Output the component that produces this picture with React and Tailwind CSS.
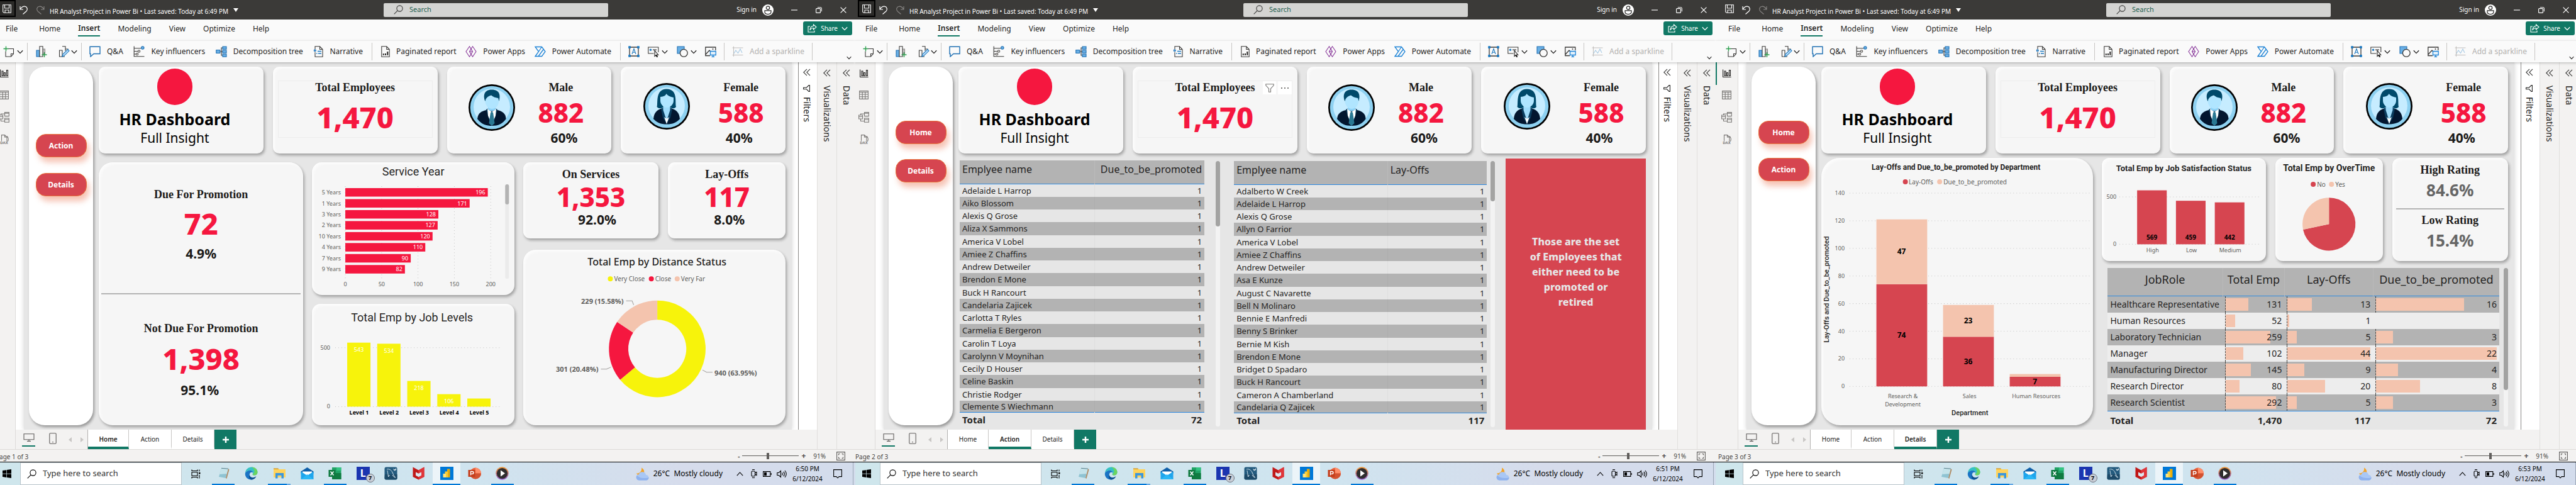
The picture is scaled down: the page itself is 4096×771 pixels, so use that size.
import React from "react";
import clsx from "clsx";

/* ------------------------------------------------------------------ */
/* Data                                                                */
/* ------------------------------------------------------------------ */

const PAGES = ["Home", "Action", "Details"];
const MENU = ["File", "Home", "Insert", "Modeling", "View", "Optimize", "Help"];

const SERVICE_YEARS = [
  ["5 Years", 196],
  ["1 Years", 171],
  ["3 Years", 128],
  ["2 Years", 127],
  ["10 Years", 120],
  ["4 Years", 110],
  ["7 Years", 90],
  ["9 Years", 82],
];

const JOB_LEVELS = [543, 534, 218, 106, 69];

const PROMOTED = [
  "Adelaide L Harrop",
  "Aiko Blossom",
  "Alexis Q Grose",
  "Aliza X Sammons",
  "America V Lobel",
  "Amiee Z Chaffins",
  "Andrew Detweiler",
  "Brendon E Mone",
  "Buck H Rancourt",
  "Candelaria Zajicek",
  "Carlotta T Ryles",
  "Carmelia E Bergeron",
  "Carolin T Loya",
  "Carolynn V Moynihan",
  "Cecily D Houser",
  "Celine Baskin",
  "Christie Rodger",
  "Clemente S Wiechmann",
];

const LAID_OFF = [
  "Adalberto W Creek",
  "Adelaide L Harrop",
  "Alexis Q Grose",
  "Allyn O Farrior",
  "America V Lobel",
  "Amiee Z Chaffins",
  "Andrew Detweiler",
  "Asa E Kunze",
  "August C Navarette",
  "Bell N Molinaro",
  "Bennie E Manfredi",
  "Benny S Brinker",
  "Bernie M Kish",
  "Brendon E Mone",
  "Bridget D Spadaro",
  "Buck H Rancourt",
  "Cameron A Chamberland",
  "Candelaria Q Zajicek",
];

const ROLES = [
  ["Healthcare Representative", 131, 13, 16],
  ["Human Resources", 52, 1, null],
  ["Laboratory Technician", 259, 5, 3],
  ["Manager", 102, 44, 22],
  ["Manufacturing Director", 145, 9, 4],
  ["Research Director", 80, 20, 8],
  ["Research Scientist", 292, 5, 3],
];

const DEPARTMENTS = [
  { lines: ["Research &", "Development"], off: 74, due: 47 },
  { lines: ["Sales"], off: 36, due: 23 },
  { lines: ["Human Resources"], off: 7, due: 2 },
];

/* ------------------------------------------------------------------ */
/* Icons                                                               */
/* ------------------------------------------------------------------ */

function Icon({ box = "0 0 18 18", className = "size-[18px]", children }) {
  return (
    <svg viewBox={box} className={clsx("shrink-0", className)} fill="none" stroke="currentColor" strokeWidth="1.1" aria-hidden="true">
      {children}
    </svg>
  );
}

const Chevron = ({ className = "h-[7px] w-[10px]" }) => (
  <Icon box="0 0 10 7" className={className}>
    <path d="M.8 1.2 5 5.6l4.200-4.400" strokeWidth="1.300" />
  </Icon>
);

const SaveIcon = () => (
  <Icon box="0 0 14 14" className="size-[14px]">
    <path d="M.7.7h12.600v12.600H2.200L.7 11.800ZM3.500.7v5.300h7V.7M4 13.300V9h6v4.300" />
  </Icon>
);
const UndoIcon = () => (
  <Icon box="0 0 13 14" className="h-[14px] w-[13px]">
    <path d="M1 1v5h5M1.200 5.800C3.500 2 6 .9 8.500 1.200c4 .6 4.800 5 2.500 7.600L5.500 13.500" strokeWidth="1.200" />
  </Icon>
);
const RedoIcon = () => (
  <Icon box="0 0 13 14" className="h-[14px] w-[13px]">
    <path d="M12 1v5H7M11.800 5.800C9.500 2 7 .9 4.500 1.200.5 1.800-.3 6.200 2 8.800l5.500 4.700" />
  </Icon>
);
const SearchIcon = ({ className = "size-[15px]" }) => (
  <Icon box="0 0 15 15" className={className}>
    <circle cx="9.500" cy="5.500" r="4.600" />
    <path d="M6.200 8.800.7 14.300" />
  </Icon>
);
const NewPageIcon = () => (
  <Icon>
    <path d="M6 4.500h10.500v8l-4 4.500H4V8.500M16.500 12.500h-4V17" stroke="#3b3a39" />
    <path d="M4.500.5v8M.5 4.500h8" stroke="#2ea04f" strokeWidth="1.400" />
  </Icon>
);
const NewVisualIcon = () => (
  <Icon>
    <path d="M1 7h5v10H1z" fill="#69afe5" stroke="#1f6fb2" />
    <path d="M10.500 5h4v8h-4z" fill="#c8c6c4" stroke="#8a8886" />
    <path d="M6 .8h5V17H6z" fill="#fafafa" stroke="#3b3a39" />
    <path d="M13.500 10v8M9.500 14h8" stroke="#2ea04f" strokeWidth="1.400" />
  </Icon>
);
const EditVisualIcon = () => (
  <Icon>
    <path d="M1.500 7h4.500v10H1.500zM6 .8h5V8M6 7v10h4M11 5h4v3" stroke="#3b3a39" />
    <path d="m6 17 1-4 8-7.500 2 2.300L9 15.600Z" fill="#bfe0fa" stroke="#1f7ac0" />
  </Icon>
);
const QaIcon = () => (
  <Icon>
    <path d="M1 1.200h16v11.300H7l-5 4.500v-4.500H1Z" stroke="#1f6fb2" strokeWidth="1.400" />
  </Icon>
);
const KeyInfluencersIcon = () => (
  <Icon>
    <path d="M1.200.5v16.300H17.500M1.200 3.800h11M1.200 8.500h6M1.200 13h3" stroke="#3b3a39" />
    <circle cx="14.800" cy="3" r="2.200" fill="#69afe5" stroke="#1f6fb2" />
    <circle cx="9" cy="8.500" r="1.800" fill="#d2d0ce" stroke="#605e5c" />
    <circle cx="6" cy="13" r="1.800" fill="#d2d0ce" stroke="#605e5c" />
  </Icon>
);
const DecompositionIcon = () => (
  <Icon>
    <path d="M7 9h4M11 3H9v12h2" stroke="#3b3a39" />
    <path d="M.8 6.500h6v5h-6zM11 1h6v4.200h-6zM11 7h6v4.200h-6zM11 13h6v4.200h-6z" fill="#69afe5" stroke="#1f6fb2" />
  </Icon>
);
const NarrativeIcon = () => (
  <Icon box="0 0 16 18" className="h-[18px] w-4">
    <path d="M3 5V.8h7.500L15 5.500v11.700H3V10M10.500.8v4.700H15" stroke="#3b3a39" />
    <circle cx="2.800" cy="7.200" r="1.500" fill="#69afe5" stroke="#1f6fb2" />
    <path d="M7 8.500h6M5 12h1.500M8 12h5" stroke="#1f7ac0" strokeWidth="1.300" />
  </Icon>
);
const PaginatedIcon = () => (
  <Icon box="0 0 14 18" className="h-[18px] w-[14px]">
    <path d="M.8.800h8L13.200 5.500v11.700H.8ZM8.800.8v4.700h4.400" stroke="#3b3a39" />
    <path d="M3.800 14.800v-2.500M7 14.800V12M10.300 14.800V9" stroke="#252423" strokeWidth="2" />
  </Icon>
);
const PowerAppsIcon = () => (
  <Icon>
    <path d="m6.500.8 5 8.200-5 8.200L1 9Z" stroke="#8a3a9b" />
    <path d="m11.500.8 5.500 8.200-5.500 8.200-5-8.200ZM6.500 9h5M4 4.900h0" stroke="#8a3a9b" />
  </Icon>
);
const PowerAutomateIcon = () => (
  <Icon>
    <path d="M1 1.500h10.500L17 9l-5.500 7.500H1L6.500 9ZM11.500 1.500 2 15.500M14.500 5 6 16.500" stroke="#1f84d6" strokeWidth="1.300" />
  </Icon>
);
const TextBoxIcon = () => (
  <Icon>
    <path d="M2 2h14v14H2z" stroke="#3b3a39" strokeWidth="1.300" />
    <path d="M.8.8h2.600v2.600H.8zM14.600.8h2.600v2.600h-2.600zM.8 14.600h2.600v2.600H.8zM14.600 14.600h2.600v2.600h-2.600z" fill="#1f7ac0" stroke="#1f7ac0" />
    <path d="m6 13 3-8.500L12 13M7 10.300h4" stroke="#1f7ac0" />
  </Icon>
);
const ButtonsIcon = () => (
  <Icon>
    <path d="M9.500 12H.8V2h16v8" stroke="#3b3a39" />
    <circle cx="4.500" cy="6.200" r="1.700" fill="#1f7ac0" stroke="none" />
    <path d="M8 6.200h6" stroke="#3b3a39" strokeWidth="1.300" />
    <path d="M11 7.500v9l2-1.800 1.500 3 1-.5-1.500-3h2.700Z" fill="#fafafa" stroke="#252423" />
  </Icon>
);
const ShapesIcon = () => (
  <Icon>
    <path d="M1 1h11v11H1z" fill="#69afe5" stroke="#1f6fb2" />
    <circle cx="11.300" cy="11.300" r="5.900" fill="#fafafa" stroke="#3b3a39" strokeWidth="1.300" />
  </Icon>
);
const ImageIcon = () => (
  <Icon>
    <path d="M8 15.500H.8V2h16v5M1 13.500l6-6.500 3 3.500" stroke="#3b3a39" strokeWidth="1.300" />
    <circle cx="12.500" cy="5" r="1" fill="#3b3a39" stroke="none" />
    <path d="M8.500 8.500h8.700v6H8.500zM12.800 14.500v3M10.500 17.400h4.600" fill="#e6f2fb" stroke="#1f84d6" strokeWidth="1.300" />
  </Icon>
);
const SparklineIcon = () => (
  <Icon>
    <path d="M2.500.8v16M.5 3h17M.5 14.500h17" stroke="#c0bebc" />
    <path d="m3 12 3-5 3.500 4.500L13 5l3 6" stroke="#a9cbe4" />
  </Icon>
);
const ShareIcon = () => (
  <Icon box="0 0 15 14" className="h-[14px] w-[15px]">
    <path d="M4 4H1v9h10v-2.500M9.500 1 14 5 9.500 9V6.500C6.500 6.500 5 8 3.800 10 4.200 6.500 6 3.600 9.500 3.300Z" stroke="white" />
  </Icon>
);
const PersonIcon = () => (
  <Icon box="0 0 18 18" className="size-[18px]">
    <circle cx="9" cy="9" r="9" fill="white" stroke="none" />
    <circle cx="9" cy="5.500" r="2.700" stroke="#252423" strokeWidth="1.200" />
    <path d="M4 9.800h10v2c0 5-10 5-10 0Z" stroke="#252423" strokeWidth="1.200" />
  </Icon>
);

const RailChart = () => (
  <Icon box="0 0 14 13" className="h-[13px] w-[14px] text-[#252423]">
    <path d="M.6.500v12h13M3 3h2v7.500H3zM6.500 5.500h2v5h-2zM10.500 1.500h2v9h-2z" />
  </Icon>
);
const RailTable = () => (
  <Icon box="0 0 15 14" className="h-[14px] w-[15px] text-[#7a7876]">
    <path d="M.6.600h13.800v12.800H.6zM.6 2.500h13.800M.6 6h13.800M.6 9.800h13.800M5.200 2.500v11M9.800 2.500v11" />
  </Icon>
);
const RailModel = () => (
  <Icon box="0 0 17 17" className="size-[17px] text-[#7a7876]">
    <path d="M9.500.6h6.800v6H9.500zM9.500 2.300h6.800M.6 5h6v6h-6zM.6 7.500h6M9.500 10h6.800v6.200H9.500zM9.500 12h6.800M3.500 5V3h6M3.500 11v3.500h6" />
  </Icon>
);
const RailDax = () => (
  <div className="flex flex-col items-center text-[#7a7876]">
    <Icon box="0 0 14 11" className="-mb-px h-[11px] w-[14px]">
      <path d="M2.500 10V.6h5L11 4v7M7.500.6V4H11M11 2.500c2.500 2 2.800 5.500 1.500 8" />
    </Icon>
    <span className="text-[6px] font-bold leading-[6px]">DAX</span>
  </div>
);

const DoubleLeft = () => (
  <Icon box="0 0 12 12" className="size-3 text-[#3b3a39]">
    <path d="M6 .8.800 6 6 11.200M11 .8 5.800 6l5.200 5.200" />
  </Icon>
);

/* Taskbar icons */
const WindowsIcon = () => (
  <svg viewBox="0 0 14 14" className="size-[14px]" aria-hidden="true">
    <path d="M0 2 6 1.200v5.500H0zM6.700 1 14 0v6.700H6.700zM0 7.400h6v5.500L0 12zM6.700 7.400H14V14l-7.300-1z" fill="#000" />
  </svg>
);
const TaskViewIcon = () => (
  <Icon box="0 0 15 15" className="size-[15px] text-black">
    <path d="M1 .5v2h9v-2M1 4.800h9v5.400H1zM1 14.500v-2h9v2M13 .5v3M13 9v5.500" />
    <path d="M12 5h2.500v2.500H12z" fill="#000" stroke="none" />
  </Icon>
);
const APPS = [
  {
    name: "Notepad",
    open: true,
    art: (
      <>
        <path d="m7 2 11 1-4 15-11-2Z" fill="#8fc3d2" />
        <path d="m7 2 11 1-2 8-12 1Z" fill="#c4e3ea" />
        <path d="m18 3 1.500 1.500-4 14.500-1.500-1Z" fill="#b08a62" />
        <path d="M7 2.300 18 3.200" stroke="#5b7f8a" strokeWidth="1" />
      </>
    ),
  },
  {
    name: "Edge",
    art: (
      <>
        <path d="M.8 11C1 4 6 .5 11 .5c6 0 9.500 4 9.500 8 0 3-2 5-5 5-2 0-3-.8-3-1.800 0-.8.8-1 .8-2.500C13.300 7 11 5.800 8.500 5.800 5 5.800 1.500 8 .8 11Z" fill="#35c1c4" />
        <path d="M11 .5c6 0 9.500 4 9.500 8 0 3-2 5-5 5-2 0-3-.8-3-1.800 3.500-.2 5-8-1.500-11.200Z" fill="#6cd45f" />
        <path d="M.8 11C1.500 8 5 5.800 8.500 5.800 11 5.800 13.300 7 13.300 9.200 10 7.500 7.500 10 7.800 13c.4 3.500 4.500 6 9.500 4-2 2.500-4.500 3.500-7 3.500C4.500 20.500.6 16 .8 11Z" fill="#1b74c4" />
        <path d="M7.800 13c.4 3.500 4.500 6 10.700 2.300-2 4-5 5.200-8 5.200-3.500-1-4.500-5-2.700-7.500Z" fill="#0d4f91" />
      </>
    ),
  },
  {
    name: "File Explorer",
    open: true,
    stacked: true,
    art: (
      <>
        <path d="M1 2.500h7l2 2h-9Z" fill="#d99a1c" />
        <path d="M1 4h19v13H1z" fill="#ffd35c" />
        <path d="M4 18.500V10h13v8.500h-3.500v-4.800h-6v4.800Z" fill="#3a96dd" />
      </>
    ),
  },
  {
    name: "Mail",
    art: (
      <>
        <path d="M.5 7.500 10.500 1l10 6.500v3H.5Z" fill="#0f5fa8" />
        <path d="M3 7.500h15v7H3z" fill="#fff" />
        <path d="M.5 7.500 10.500 14l10-6.500V20H.5Z" fill="#1fa5ec" />
        <path d="m.5 20 10-8 10 8Z" fill="#2bb7f5" />
      </>
    ),
  },
  {
    name: "Excel",
    open: true,
    art: (
      <>
        <path d="M6 1h14.500v19H6z" fill="#21a366" />
        <path d="M13 1h7.500v5H13z" fill="#33c481" />
        <path d="M6 10h14.500v10H6z" fill="#107c41" />
        <path d="M.5 5h11v11H.5z" fill="#0f7a40" />
        <path d="m3.500 7.500 5 6M8.500 7.500l-5 6" stroke="#fff" strokeWidth="1.500" />
      </>
    ),
  },
  { name: "L", letter: true },
  {
    name: "MySQL Workbench",
    art: (
      <>
        <rect x=".5" y=".5" width="20" height="20" rx="2.500" fill="#245b7e" />
        <path d="M1 12h19.500v6q0 2.500-2.500 2.500H3Q.5 20.500.5 18Z" fill="#1d4a68" />
        <path d="M4 4c4-1 7 1 9 5s2 6 5 8c-3-.5-4-2-5-4M5 6c.5 4 1 5 1.500 10l2-3" fill="none" stroke="#cfe0ea" strokeWidth="1" />
        <path d="m14 3 3 1.500L19 2v3l-3 1.500Z" fill="#dfe9ef" />
      </>
    ),
  },
  {
    name: "McAfee",
    art: (
      <>
        <path d="m1.500.5 9 5 9-5V16l-9 4.500-9-4.500Z" fill="#c01818" />
        <path d="m10.500 5.500 9-5V16l-9 4.500v-4.300l4.500-2.400V8.500l-4.500 2.300Z" fill="#e0353a" />
        <path d="m6 8.500 4.500 2.300L15 8.500v5.300l-4.500 2.400L6 13.800Z" fill="#dce6ef" />
      </>
    ),
  },
  {
    name: "Power BI",
    open: true,
    current: true,
    art: (
      <>
        <path d="M0 0h21v21H0z" fill="#0078d7" />
        <path d="M11 3.500h4.500v13.500H11z" fill="#e8ad0c" />
        <path d="M7.500 7.500H12V17H7.500z" fill="#f6cd3c" />
        <path d="M4.500 11H9v6H4.500z" fill="#ffe27a" />
      </>
    ),
  },
  {
    name: "PowerPoint",
    art: (
      <>
        <circle cx="12" cy="10.500" r="9" fill="#e8623d" />
        <path d="M12 1.500a9 9 0 0 1 9 9h-9Z" fill="#ff8f6b" />
        <path d="M3 10.500h18a9 9 0 0 1-18 0Z" fill="#d35230" />
        <path d="M.5 5h11v11H.5z" fill="#c43e1c" />
        <path d="M4.500 13.500v-6h2.300q2.200.2 2.200 2t-2.200 1.900H4.800" stroke="#fff" strokeWidth="1.400" fill="none" />
      </>
    ),
  },
  {
    name: "Media Player",
    open: true,
    art: (
      <>
        <defs>
          <linearGradient id="media-ring" x1="0" y1="0" x2="0" y2="1">
            <stop offset="0" stopColor="#f79a2f" />
            <stop offset="1" stopColor="#8e5bd0" />
          </linearGradient>
        </defs>
        <circle cx="10.500" cy="10.500" r="10.300" fill="url(#media-ring)" />
        <circle cx="10.500" cy="10.500" r="8.600" fill="#2f2d2e" />
        <path d="m8 5.500 7 5-7 5Z" fill="#fff" />
      </>
    ),
  },
];

const WeatherIcon = () => (
  <svg viewBox="0 0 22 21" className="h-[21px] w-[22px]" aria-hidden="true">
    <path d="M9 .5C14 3 15 9 10 12.500 6.500 14 2.500 13 1 9.500 6 10 10 6 9 .5Z" fill="#f2a52d" />
    <path d="M5 20.500a4.700 4.700 0 0 1-.3-9.300 6 6 0 0 1 11.500.8A4.300 4.300 0 0 1 17 20.500Z" fill="#a9c7f5" />
    <path d="M5 20.500a4.700 4.700 0 0 1-3-8c3 4 8 5 15 4.500 2 0 3-1 3.500-1.500a4.300 4.300 0 0 1-3.500 5Z" fill="#8fb2ee" />
  </svg>
);

/* Portraits */
function Portrait({ kind }) {
  return (
    <svg viewBox="0 0 74 74" className="size-[74px] shrink-0" role="img" aria-label={kind}>
      <circle cx="37" cy="37" r="37" fill="#000" />
      <circle cx="37" cy="37" r="34.300" fill="#8ed1f1" />
      <circle cx="37" cy="36" r="29" fill="#c6ecff" />
      {kind === "Male" ? (
        <>
          <path d="M14 55c1-9 6-12 14-14h18c8 2 13 5 13.600 14C54 63 47 66 37 66S20 63 14 55Z" fill="#03162f" />
          <path d="m28 40 4-2h10l4 2-4 14-5 12-5-12Z" fill="#0a3c5e" />
          <path d="m30 39 7 5 7-5-1 11-6 14-6-14Z" fill="#fff" />
          <path d="m35 45 2-1.500 2 1.500.500 3 2 14-4.500 4-4.500-4 2-14Z" fill="#2a7893" />
          <path d="M31 34h12v6q-6 5-12 0Z" fill="#8fd3f7" />
          <path d="M26.500 19h21.500v8c0 7-5 12-10.700 12S27 34 26.500 27Z" fill="#b0e5ff" />
          <path d="M26.500 27C23 19 24 8.500 37 8.500S51 18 48.500 27l-1.300-5q-7-1-11.200-4.500-6 1.500-8.500 6Z" fill="#00496a" />
        </>
      ) : (
        <>
          <path d="M21.500 38c2-6-3-28 15.500-28.500C55.500 10 50 30 52 38q-3 3.500-8 1.500H30q-5 2-8.500-1.500Z" fill="#00496a" />
          <path d="M16 57c1-10 5-14 14-17h14c9 3 13 7 14 17-5 6-12 8.500-21 8.500S21 63 16 57Z" fill="#03162f" />
          <path d="m28 41 5-2h8l5 2-3 14-6 10-6-10Z" fill="#0a3c5e" />
          <path d="M31.500 34h11v9l-4.500 14h-2l-4.500-14Z" fill="#a0dcfb" />
          <path d="m33 54 4 3 4-3-4 11Z" fill="#fff" />
          <path d="M27 22q8-.5 9.500-5 3 4.500 11.500 6v5c0 6-5 11-10.500 11S27 34 27 28Z" fill="#b0e5ff" />
        </>
      )}
    </svg>
  );
}

/* ------------------------------------------------------------------ */
/* Window chrome                                                       */
/* ------------------------------------------------------------------ */

function TitleBar({ saveFocused, id }) {
  return (
    <header className="flex h-[31px] items-center bg-[#3b3a38] text-white">
      <div className="flex w-[621px] items-center pl-2">
        <button
          aria-label="Save"
          className={clsx("mb-1 flex h-[27px] w-7 items-center justify-center", saveFocused && "border-2 border-black bg-[#2b2a28]")}
        >
          <SaveIcon />
        </button>
        <button aria-label="Undo" className="ml-[6px]">
          <UndoIcon />
        </button>
        <button aria-label="Redo" className="ml-[14px] text-[#8a8886]">
          <RedoIcon />
        </button>
        <button className="ml-2 flex items-center gap-2 pt-1 text-[10px] leading-4">
          HR Analyst Project in Power Bi • Last saved: Today at 6:49 PM
          <svg viewBox="0 0 8 6" className="mb-1 h-[6px] w-2" aria-hidden="true">
            <path d="M0 0h8L4 6Z" fill="white" />
          </svg>
        </button>
      </div>
      <label htmlFor={`${id}-find`} className="flex h-[22px] w-[357px] items-center gap-[10px] rounded-[2px] bg-[#d4d4d2] pl-4 text-[#3b3a39]">
        <SearchIcon />
        <input
          id={`${id}-find`}
          type="text"
          placeholder="Search"
          className="w-full bg-transparent text-[11px] text-[#1f5f50] outline-none placeholder:text-[#1f5f50]"
        />
      </label>
      <div className="ml-auto flex items-center pr-[14px]">
        <button className="flex items-center gap-[9px] text-[10px]">
          Sign in
          <PersonIcon />
        </button>
        <button aria-label="Minimize" className="ml-[28px]">
          <Icon box="0 0 10 10" className="size-[10px]">
            <path d="M0 5h10" />
          </Icon>
        </button>
        <button aria-label="Restore" className="ml-[29px]">
          <Icon box="0 0 10 10" className="size-[10px]">
            <rect x=".6" y="2.600" width="6.800" height="6.800" rx="1" />
            <path d="M2.800.8h4.700q1.800 0 1.800 1.800v4.700" />
          </Icon>
        </button>
        <button aria-label="Close" className="ml-[29px]">
          <Icon box="0 0 10 10" className="size-[10px]">
            <path d="m.6.6 8.800 8.800M9.400.6.600 9.400" strokeWidth="1.200" />
          </Icon>
        </button>
      </div>
    </header>
  );
}

function MenuBar() {
  return (
    <nav className="flex h-[34px] items-start bg-[#fafafa] pl-[20px] pr-[5px] text-[12px] leading-4 text-[#252423]">
      <div className="flex gap-[28px] pt-[6px]">
        {MENU.map((m) => (
          <button
            key={m}
            className={clsx("h-[21px] pb-1", m === "File" && "mr-[6px]", m === "Insert" && "border-b-2 border-[#117865] font-semibold")}
          >
            {m}
          </button>
        ))}
      </div>
      <button className="ml-auto mt-[3px] flex h-[22px] items-center gap-[6px] rounded-[3px] bg-[#117865] px-[7px] text-[10px] text-white">
        <ShareIcon />
        Share
        <Chevron />
      </button>
    </nav>
  );
}

function Tool({ icon, children, className }) {
  return (
    <button className={clsx("flex items-center gap-[10px] whitespace-nowrap", className)}>
      {icon}
      {children}
    </button>
  );
}

function Ribbon() {
  const group = "flex h-7 items-center border-r border-[#c8c6c4]";
  return (
    <div className="z-10 flex h-[34px] items-center bg-[#fafafa] text-[12px] leading-4 text-[#252423] shadow-[0_1px_4px_rgba(0,0,0,0.25)]">
      <div className={clsx(group, "w-[55px] gap-1 pl-[16px]")}>
        <button aria-label="New page">
          <NewPageIcon />
        </button>
        <Chevron />
      </div>
      <div className={clsx(group, "w-[86px] pl-[13px]")}>
        <button aria-label="New visual">
          <NewVisualIcon />
        </button>
        <button aria-label="More visuals" className="ml-[18px] flex items-center gap-[2px]">
          <EditVisualIcon />
          <Chevron />
        </button>
      </div>
      <div className={clsx(group, "w-[462px] justify-between pl-3 pr-[14px]")}>
        <Tool icon={<QaIcon />}>Q&amp;A</Tool>
        <Tool icon={<KeyInfluencersIcon />}>Key influencers</Tool>
        <Tool icon={<DecompositionIcon />}>Decomposition tree</Tool>
        <Tool icon={<NarrativeIcon />}>Narrative</Tool>
      </div>
      <div className={clsx(group, "w-[395px] justify-between pl-[14px] pr-[14px]")}>
        <Tool icon={<PaginatedIcon />}>Paginated report</Tool>
        <Tool icon={<PowerAppsIcon />}>Power Apps</Tool>
        <Tool icon={<PowerAutomateIcon />}>Power Automate</Tool>
      </div>
      <div className={clsx(group, "w-[165px] justify-between pl-3 pr-3")}>
        <button aria-label="Text box">
          <TextBoxIcon />
        </button>
        <button aria-label="Buttons" className="flex items-center gap-1">
          <ButtonsIcon />
          <Chevron />
        </button>
        <button aria-label="Shapes" className="flex items-center gap-1">
          <ShapesIcon />
          <Chevron />
        </button>
        <button aria-label="Image">
          <ImageIcon />
        </button>
      </div>
      <div className={clsx(group, "w-[140px] pl-3")}>
        <Tool icon={<SparklineIcon />} className="text-[#b3b1af]">
          Add a sparkline
        </Tool>
      </div>
      <button aria-label="Collapse ribbon" className="ml-auto mr-[6px] self-end pb-1">
        <Chevron className="h-[6px] w-2" />
      </button>
    </div>
  );
}

function Rail({ marked }) {
  return (
    <aside className="relative w-[36px] shrink-0 border-r border-[#dddbd9] bg-[#f3f2f1]">
      {marked && <span className="absolute left-0 top-0 h-9 w-[2px] bg-[#117865]" />}
      <div className="flex flex-col items-center pt-[11px]">
        <button aria-label="Report view" className="flex h-[13px] items-center">
          <RailChart />
        </button>
        <button aria-label="Table view" className="mt-[21px]">
          <RailTable />
        </button>
        <button aria-label="Model view" className="mt-[20px]">
          <RailModel />
        </button>
        <button aria-label="DAX query view" className="mt-[19px]">
          <RailDax />
        </button>
      </div>
    </aside>
  );
}

function SidePane({ title, className, lead }) {
  return (
    <aside className={clsx("flex shrink-0 flex-col items-center border-l text-[#252423]", className)}>
      <button aria-label={`Expand ${title}`}>
        <DoubleLeft />
      </button>
      {lead}
      <h2 className={clsx("text-[14px] leading-4 [writing-mode:vertical-rl]", lead ? "mt-2" : "mt-[14px]")}>{title}</h2>
    </aside>
  );
}

function PageTabs({ active }) {
  return (
    <div className="flex h-[31px] bg-[#f3f2f1]">
      <button aria-label="Desktop layout" className="ml-[10px] flex h-[27px] w-[21px] flex-col items-center justify-between border-b-2 border-[#117865] pt-[6px] text-[#605e5c]">
        <Icon box="0 0 18 13" className="h-[13px] w-[18px]">
          <path d="M1 .8h16v9H1zM9 9.800v2.500M6 12.400h6" />
        </Icon>
      </button>
      <button aria-label="Mobile layout" className="ml-[22px] flex h-[27px] items-center text-[#605e5c]">
        <Icon box="0 0 12 18" className="h-[18px] w-3">
          <rect x=".8" y=".8" width="10.400" height="16.400" rx="1.200" />
          <path d="M5 14.800h2" />
        </Icon>
      </button>
      <div className="ml-[19px] flex items-center gap-[14px] text-[#c8c6c4]">
        <svg viewBox="0 0 5 8" className="h-2 w-[5px]" fill="currentColor" aria-hidden="true">
          <path d="M5 0v8L0 4Z" />
        </svg>
        <svg viewBox="0 0 5 8" className="h-2 w-[5px]" fill="currentColor" aria-hidden="true">
          <path d="M0 0v8l5-4Z" />
        </svg>
      </div>
      <div className="ml-[6px] flex border-l border-[#b3b1af]">
        {PAGES.map((p) => (
          <button
            key={p}
            className={clsx(
              "h-full border-b-4 border-r border-r-[#c8c6c4] bg-white pt-1 text-[10px] text-[#252423]",
              p === "Home" ? "w-[65px]" : "w-[68px]",
              p === active ? "border-b-[#117865] font-semibold" : "border-b-white"
            )}
          >
            {p}
          </button>
        ))}
        <button aria-label="New page" className="flex w-[35px] items-center justify-center bg-[#117865]">
          <svg viewBox="0 0 10 10" className="size-[10px]" aria-hidden="true">
            <path d="M5 0v10M0 5h10" stroke="white" strokeWidth="2.400" />
          </svg>
        </button>
      </div>
    </div>
  );
}

function StatusBar({ page }) {
  return (
    <footer className="flex h-[20px] items-center border-t border-[#dddbd9] bg-[#f3f2f1] pl-1 pr-4 text-[10px] leading-4 text-[#484644]">
      <span className="mt-[3px]">Page {page} of 3</span>
      <div className="ml-auto flex items-center">
        <button aria-label="Zoom out" className="mr-1 font-bold">
          -
        </button>
        <input
          aria-label="Zoom"
          type="range"
          min="0"
          max="200"
          defaultValue="90"
          className="h-[10px] w-[90px] appearance-none bg-[linear-gradient(#605e5c,#605e5c)] bg-[length:100%_1px] bg-center bg-no-repeat [&::-webkit-slider-thumb]:h-[10px] [&::-webkit-slider-thumb]:w-1 [&::-webkit-slider-thumb]:appearance-none [&::-webkit-slider-thumb]:bg-[#605e5c]"
        />
        <button aria-label="Zoom in" className="ml-1 text-[12px] font-bold">
          +
        </button>
        <span className="ml-3">91%</span>
        <button aria-label="Fit to page" className="ml-[17px] text-[#605e5c]">
          <Icon box="0 0 14 14" className="size-[14px]">
            <path d="M.6.6h12.800v12.800H.6zM3.500 5.500v-2h2M8.500 3.500h2v2M10.500 8.500v2h-2M5.500 10.500h-2v-2" />
          </Icon>
        </button>
      </div>
    </footer>
  );
}

function Taskbar({ time, id }) {
  return (
    <div className="flex h-[37px] items-stretch border-t border-black bg-[linear-gradient(90deg,#cfe6ec_0%,#cfe4ef_55%,#d6dcec_80%,#d3dcec_100%)] text-black">
      <button aria-label="Start" className="flex w-[43px] items-center justify-center">
        <WindowsIcon />
      </button>
      <label htmlFor={`${id}-start`} className="flex w-[257px] items-center gap-[10px] border border-[#b8c4ca] bg-white pl-[10px]">
        <SearchIcon />
        <input
          id={`${id}-start`}
          type="text"
          placeholder="Type here to search"
          className="w-full bg-transparent text-[13px] outline-none placeholder:text-[#333333]"
        />
      </label>
      <div className="flex w-[532px]">
        <button aria-label="Task view" className="flex flex-1 items-center justify-center">
          <TaskViewIcon />
        </button>
        {APPS.map((app) => (
          <button
            key={app.name}
            aria-label={app.name}
            className={clsx("flex flex-1 flex-col items-center", app.current && "bg-white/60")}
          >
            <span className="flex flex-1 items-center">
              {app.letter ? (
                <span className="relative flex size-[21px] items-center justify-center bg-[#1b35b0] text-[16px] font-bold leading-none text-white">
                  L
                  <span className="absolute -bottom-[4px] -right-[8px] flex size-[14px] items-center justify-center rounded-full border border-[#6d7480] bg-[#c9ced6] text-[9px] text-black">
                    7
                  </span>
                </span>
              ) : (
                <svg viewBox="0 0 21 21" className="size-[21px]" aria-hidden="true">
                  {app.art}
                </svg>
              )}
            </span>
            <span
              className={clsx(
                "h-[2px]",
                app.current ? "w-full" : "w-[36px]",
                app.open && "bg-[#0078d7]",
                app.stacked && "border-r-[6px] border-[#62a8e5]"
              )}
            />
          </button>
        ))}
      </div>
      <div className="ml-auto flex items-center">
        <WeatherIcon />
        <span className="ml-[6px] whitespace-pre text-[12px]">26°C  Mostly cloudy</span>
        <Icon box="0 0 11 7" className="ml-[22px] h-[7px] w-[11px]">
          <path d="M.8 6.200 5.500 1l4.700 5.200" />
        </Icon>
        <Icon box="0 0 10 14" className="ml-3 h-[14px] w-[10px]">
          <rect x="1" y="3" width="5.500" height="8" rx="1.200" />
          <path d="m6.500 6 2.500-1.500v5L6.500 8M2 .8q2.500-.6 4 0M2 13.200q2.500.6 4 0" />
        </Icon>
        <Icon box="0 0 14 9" className="ml-[9px] h-[9px] w-[14px]">
          <path d="M.6.600h11.200v7.800H.6zM13.200 3v3" />
          <path d="M2 2h4v5H2z" fill="#000" stroke="none" />
        </Icon>
        <Icon box="0 0 16 13" className="ml-2 h-[13px] w-4">
          <path d="M.8 4.500h2.500L6.500 1.500v10L3.300 8.500H.8ZM8.500 4.500q1.500 2 0 4M10.800 2.800q3 3.700 0 7.400M13 1q4.500 5.500 0 11" />
        </Icon>
        <span className="ml-2 w-[50px] text-center text-[10px] leading-4">
          {time}
          <br />
          6/12/2024
        </span>
        <button aria-label="Notifications" className="ml-4">
          <Icon box="0 0 14 15" className="h-[15px] w-[14px]">
            <path d="M.6.600h12.800v11H9.200L7 13.800 4.800 11.600H.6Z" />
          </Icon>
        </button>
        <span className="ml-[17px] h-[36px] w-1 border-l border-[#9aa5b5]" />
      </div>
    </div>
  );
}

/* ------------------------------------------------------------------ */
/* Report building blocks                                              */
/* ------------------------------------------------------------------ */

function Card({ className, children }) {
  return (
    <section
      className={clsx(
        "min-w-0 bg-[#f6f6f6] shadow-[2px_3px_4px_rgba(0,0,0,0.3),inset_3px_3px_4px_rgba(255,255,255,0.7)]",
        className
      )}
    >
      {children}
    </section>
  );
}

const SerifTitle = ({ children, className }) => (
  <h3 className={clsx("whitespace-nowrap font-['Liberation_Serif',serif] text-[18px] font-bold leading-6 text-[#1b1a19]", className)}>{children}</h3>
);
const Big = ({ children, className }) => (
  <p className={clsx("text-[47px] font-extrabold leading-[56px] text-[#f5173f]", className)}>{children}</p>
);
const Mid = ({ children }) => <p className="text-[42px] font-extrabold leading-[48px] text-[#f5173f]">{children}</p>;
const Pct = ({ children, className }) => (
  <p className={clsx("text-[21px] font-bold leading-6 text-[#1b1a19]", className)}>{children}</p>
);

function NavPill({ items, className }) {
  return (
    <nav className={clsx("mb-[7px] flex w-[102px] shrink-0 flex-col items-center rounded-[25px] bg-white shadow-[2px_3px_4px_rgba(0,0,0,0.35)]", className)}>
      {items.map((item) => (
        <a
          key={item}
          href={`#${item.toLowerCase()}`}
          className="flex h-[37px] w-[81px] items-center justify-center rounded-[16px] border border-[#e8743b] bg-[#d64550] text-[12px] font-bold text-white shadow-[4px_8px_10px_rgba(232,108,70,0.4)]"
        >
          {item}
        </a>
      ))}
    </nav>
  );
}

function TopRow({ hovered }) {
  return (
    <div className="grid grid-cols-4 gap-[15px]">
      <Card className="flex h-[138px] flex-col items-center rounded-[10px] pr-5 pt-[3px] text-black">
        <span className="h-[58px] w-[56px] rounded-full bg-[#f5173f]" />
        <h1 className="mt-[6px] whitespace-nowrap text-[25px] font-bold leading-8">HR Dashboard</h1>
        <p className="text-[21px] leading-7">Full Insight</p>
      </Card>
      <Card className="relative h-[138px] rounded-[10px] px-2 pt-[22px]">
        <div className="flex h-[91px] flex-col items-center border border-[#ededed]">
          <SerifTitle className="-mt-[2px]">Total Employees</SerifTitle>
          <Big className="mt-[7px]">1,470</Big>
        </div>
        {hovered && (
          <div className="absolute right-[9px] top-[23px] flex gap-[3px] text-[#7a7876]">
            <button aria-label="Filters on this visual" className="flex h-[21px] w-[21px] items-center justify-center bg-white">
              <Icon box="0 0 14 14" className="size-[14px]">
                <path d="M.8.800h12.400v2L8.500 8v5.200h-3V8L.8 2.800Z" />
              </Icon>
            </button>
            <button aria-label="More options" className="flex h-[21px] w-[22px] items-center justify-center bg-white">
              <Icon box="0 0 14 4" className="h-1 w-[14px]">
                <path d="M1 1h2v2H1zM6 1h2v2H6zM11 1h2v2h-2z" fill="currentColor" stroke="none" />
              </Icon>
            </button>
          </div>
        )}
      </Card>
      <Card className="flex h-[138px] rounded-[10px] pl-[34px]">
        <div className="mt-7">
          <Portrait kind="Male" />
        </div>
        <div className="mr-[7px] flex flex-1 flex-col items-center gap-1 pt-[21px]">
          <SerifTitle>Male</SerifTitle>
          <Mid>882</Mid>
          <Pct className="ml-[10px]">60%</Pct>
        </div>
      </Card>
      <Card className="flex h-[138px] rounded-[10px] pl-[36px]">
        <div className="mt-[26px]">
          <Portrait kind="Female" />
        </div>
        <div className="ml-[10px] flex flex-1 flex-col items-center gap-1 pt-[21px]">
          <SerifTitle>Female</SerifTitle>
          <Mid>588</Mid>
          <Pct className="mr-[6px]">40%</Pct>
        </div>
      </Card>
    </div>
  );
}

function Scroller({ thumb, className }) {
  return (
    <div className={clsx("w-[7px] shrink-0 rounded-full bg-[#f3f3f3]", className)}>
      <div className={clsx("rounded-full bg-[#a3a3a2]", thumb)} />
    </div>
  );
}

/* ------------------------------------------------------------------ */
/* Charts                                                              */
/* ------------------------------------------------------------------ */

const AXIS = "fill-[#605e5c] text-[9px]";
const DIN = "fill-[#252423] font-['Roboto',sans-serif]";
const DOTS = { stroke: "#c4c4c4", strokeWidth: 1, strokeDasharray: "1 4" };

function ServiceYearChart() {
  return (
    <svg viewBox="0 0 321 211" className="block w-full">
      <text x="161" y="21" textAnchor="middle" className={clsx(DIN, "text-[18px]")}>
        Service Year
      </text>
      {[0, 50, 100, 150, 200].map((t) => (
        <g key={t}>
          <line x1={53 + t * 1.155} x2={53 + t * 1.155} y1="38" y2="185" {...DOTS} />
          <text x={53 + t * 1.155} y="197" textAnchor="middle" className={AXIS}>
            {t}
          </text>
        </g>
      ))}
      {SERVICE_YEARS.map(([label, v], i) => (
        <g key={label}>
          <rect x="53" y={41 + i * 17.45} width={v * 1.155} height="13.500" fill="#f5173f" />
          <text x="46" y={51 + i * 17.45} textAnchor="end" className={AXIS}>
            {label}
          </text>
          <text x={49 + v * 1.155} y={51 + i * 17.45} textAnchor="end" className="fill-white text-[9px]">
            {v}
          </text>
        </g>
      ))}
      <rect x="307" y="35" width="6" height="150" rx="3" fill="#ebebeb" />
      <rect x="307" y="35" width="6" height="32" rx="3" fill="#b3b3b3" />
    </svg>
  );
}

function JobLevelsChart() {
  return (
    <svg viewBox="0 0 321 193" className="block w-full">
      <text x="159" y="28" textAnchor="middle" className={clsx(DIN, "text-[18px]")}>
        Total Emp by Job Levels
      </text>
      {[500, 0].map((t) => (
        <g key={t}>
          <line x1="37" x2="302" y1={163.3 - t * 0.1872} y2={163.3 - t * 0.1872} {...DOTS} />
          <text x="29" y={166.3 - t * 0.1872} textAnchor="end" className={AXIS}>
            {t}
          </text>
        </g>
      ))}
      {JOB_LEVELS.map((v, i) => (
        <g key={v}>
          <rect x={56 + i * 47.7} y={163.3 - v * 0.1872} width="37" height={v * 0.1872} fill="#f7f30b" />
          {v > 100 && (
            <text x={74.5 + i * 47.7} y={177.5 - v * 0.1872} textAnchor="middle" className="fill-white text-[9px]">
              {v}
            </text>
          )}
          <text x={75 + i * 47.7} y="176" textAnchor="middle" className="fill-black text-[9px] font-bold">
            Level {i + 1}
          </text>
        </g>
      ))}
    </svg>
  );
}

function slice(cx, cy, r, hole, from, to) {
  const pt = (radius, f) => {
    const a = 2 * Math.PI * f;
    return `${cx + radius * Math.sin(a)} ${cy - radius * Math.cos(a)}`;
  };
  const large = to - from > 0.5 ? 1 : 0;
  if (!hole) return `M${cx} ${cy}L${pt(r, from)}A${r} ${r} 0 ${large} 1 ${pt(r, to)}Z`;
  return `M${pt(r, from)}A${r} ${r} 0 ${large} 1 ${pt(r, to)}L${pt(hole, to)}A${hole} ${hole} 0 ${large} 0 ${pt(hole, from)}Z`;
}

function DistanceChart() {
  const legend = [
    ["Very Close", 138, "#f7f30b"],
    ["Close", 203, "#f5173f"],
    ["Very Far", 244, "#f4c4ae"],
  ];
  const label = "fill-[#605e5c] text-[11px] font-bold";
  return (
    <svg viewBox="0 0 416 278" className="block w-full">
      <text x="212" y="25" textAnchor="middle" className="fill-[#252423] text-[16px] font-medium">
        Total Emp by Distance Status
      </text>
      {legend.map(([name, x, color]) => (
        <g key={name}>
          <circle cx={x} cy="46" r="4" fill={color} />
          <text x={x + 6} y="50" className="fill-[#605e5c] text-[10px]">
            {name}
          </text>
        </g>
      ))}
      <path d={slice(212.4, 157, 76.6, 46, 0, 0.6395)} fill="#f7f30b" />
      <path d={slice(212.4, 157, 76.6, 46, 0.6395, 0.8442)} fill="#f5173f" />
      <path d={slice(212.4, 157, 76.6, 46, 0.8442, 1)} fill="#f4c4ae" />
      <path d="M163 81h9.500l2.500 6.500M123 189h9l7-3M284 190.500l6.500 3.500h9.500" fill="none" stroke="#a19f9d" />
      <text x="159" y="86" textAnchor="end" className={label}>
        229 (15.58%)
      </text>
      <text x="119" y="193" textAnchor="end" className={label}>
        301 (20.48%)
      </text>
      <text x="303" y="199" className={label}>
        940 (63.95%)
      </text>
    </svg>
  );
}

function DepartmentChart() {
  const y = (v) => 363 - v * 2.193;
  return (
    <svg viewBox="0 0 432 424" className="block w-full">
      <text x="214" y="19" textAnchor="middle" className={clsx(DIN, "text-[12px] font-bold")}>
        Lay-Offs and Due_to_be_promoted by Department
      </text>
      <circle cx="133.500" cy="38" r="4" fill="#d64550" />
      <text x="139" y="42" className="fill-[#605e5c] text-[10px]">
        Lay-Offs
      </text>
      <circle cx="188" cy="38" r="4" fill="#f4c4ae" />
      <text x="194" y="42" className="fill-[#605e5c] text-[10px]">
        Due_to_be_promoted
      </text>
      {[0, 20, 40, 60, 80, 100, 120, 140].map((t) => (
        <g key={t}>
          <line x1="45" x2="427" y1={y(t)} y2={y(t)} {...DOTS} />
          <text x="37" y={y(t) + 3} textAnchor="end" className={AXIS}>
            {t}
          </text>
        </g>
      ))}
      {DEPARTMENTS.map(({ lines, off, due }, i) => {
        const x = 87.5 + i * 105.9;
        return (
          <g key={lines[0]}>
            <rect x={x} y={y(off)} width="80.700" height={off * 2.193} fill="#d64550" />
            <rect x={x} y={y(off + due)} width="80.700" height={due * 2.193} fill="#f4c4ae" />
            <text x={x + 40} y={y(off / 2) + 4} textAnchor="middle" className="fill-black text-[12px] font-bold">
              {off}
            </text>
            {due > 5 && (
              <text x={x + 40} y={y(off + due / 2) + 4} textAnchor="middle" className="fill-black text-[12px] font-bold">
                {due}
              </text>
            )}
            {lines.map((l, n) => (
              <text key={l} x={x + 42} y={382 + n * 13} textAnchor="middle" className={AXIS}>
                {l}
              </text>
            ))}
          </g>
        );
      })}
      <text x="236" y="409" textAnchor="middle" className={clsx(DIN, "text-[11px] font-medium")}>
        Department
      </text>
      <text transform="translate(12 209) rotate(-90)" textAnchor="middle" className={clsx(DIN, "text-[11px] font-medium")}>
        Lay-Offs and Due_to_be_promoted
      </text>
    </svg>
  );
}

function SatisfactionChart() {
  const y = (v) => 137 - v * 0.1504;
  const bars = [
    ["High", 569],
    ["Low", 459],
    ["Medium", 442],
  ];
  return (
    <svg viewBox="0 0 260 164" className="block w-full">
      <text x="130" y="21" textAnchor="middle" className={clsx(DIN, "text-[13px] font-bold")}>
        Total Emp by Job Satisfaction Status
      </text>
      {[500, 0].map((t) => (
        <g key={t}>
          <line x1="28" x2="251" y1={y(t)} y2={y(t)} {...DOTS} />
          <text x="23" y={y(t) + 3} textAnchor="end" className={AXIS}>
            {t}
          </text>
        </g>
      ))}
      {bars.map(([name, v], i) => (
        <g key={name}>
          <rect x={56 + i * 61.6} y={y(v)} width="47" height={v * 0.1504} fill="#d64550" />
          <text x={79.5 + i * 61.6} y="130" textAnchor="middle" className="fill-black text-[10px] font-bold">
            {v}
          </text>
          <text x={80.5 + i * 61.6} y="150" textAnchor="middle" className={AXIS}>
            {name}
          </text>
        </g>
      ))}
    </svg>
  );
}

function OvertimeChart() {
  return (
    <svg viewBox="0 0 170 164" className="block w-full">
      <text x="85" y="21" textAnchor="middle" className={clsx(DIN, "text-[14px] font-bold")}>
        Total Emp by OverTime
      </text>
      <circle cx="60" cy="42" r="4" fill="#d64550" />
      <text x="66" y="46" className="fill-[#605e5c] text-[10px]">
        No
      </text>
      <circle cx="89" cy="42" r="4" fill="#f4c4ae" />
      <text x="95" y="46" className="fill-[#605e5c] text-[10px]">
        Yes
      </text>
      <path d={slice(85, 105, 42, 0, 0, 0.717)} fill="#d64550" />
      <path d={slice(85, 105, 42, 0, 0.717, 1)} fill="#f4c4ae" />
    </svg>
  );
}

/* ------------------------------------------------------------------ */
/* Tables                                                              */
/* ------------------------------------------------------------------ */

function PeopleTable({ measure, people, total, alignLeft, split }) {
  return (
    <table className="w-full table-fixed border-collapse text-[13px] leading-5 text-[#252423]">
      <colgroup>
        <col className={split} />
        <col />
      </colgroup>
      <thead>
        <tr className="h-[37px] border-b border-[#2b88e0] bg-[#b3b3b3] text-[16px]">
          <th className="border-r border-[#bababa] px-1 pt-1 text-left align-top font-normal">Emplyee name</th>
          <th className={clsx("px-1 pt-1 align-top font-normal", alignLeft ? "text-left" : "text-right")}>{measure}</th>
        </tr>
      </thead>
      <tbody>
        {people.map((name) => (
          <tr key={name} className="h-5 last:h-[18px] last:leading-[18px] even:bg-[#b3b3b3] nth-[4n]:h-[21px]">
            <td className="border-r border-black/3 px-1 py-0">{name}</td>
            <td className="px-1 py-0 text-right">1</td>
          </tr>
        ))}
      </tbody>
      <tfoot>
        <tr className="h-6 border-t border-[#2b88e0] text-[15px] font-bold">
          <td className="px-1 py-0">Total</td>
          <td className="px-1 py-0 text-right">{total}</td>
        </tr>
      </tfoot>
    </table>
  );
}

function BarCell({ value, max }) {
  if (value === null) return <td />;
  return (
    <td className="px-1 py-0">
      <div className="grid h-[26px] items-center border-l border-dashed border-[#484644]">
        <span className="col-start-1 row-start-1 h-5 bg-[#f4c4ae]" style={{ width: `${(value / max) * 100}%` }} />
        <span className="col-start-1 row-start-1 text-right">{value}</span>
      </div>
    </td>
  );
}

function RoleTable() {
  const th = "border-r border-[#bababa] pt-[6px] align-top font-normal last:border-r-0";
  return (
    <table className="w-full table-fixed border-collapse text-[14px] leading-5 text-[#252423]">
      <colgroup>
        <col className="w-[183px]" />
        <col className="w-[98px]" />
        <col className="w-[141px]" />
        <col />
      </colgroup>
      <thead>
        <tr className="h-[44px] border-b border-[#2b88e0] bg-[#b3b3b3] text-[18px] leading-6">
          <th className={th}>JobRole</th>
          <th className={th}>Total Emp</th>
          <th className={th}>Lay-Offs</th>
          <th className={th}>Due_to_be_promoted</th>
        </tr>
      </thead>
      <tbody>
        {ROLES.map(([role, emp, off, due]) => (
          <tr key={role} className="h-[26px] bg-[#ededed] odd:bg-[#b3b3b3]">
            <td className="whitespace-nowrap px-1 py-0">{role}</td>
            <BarCell value={emp} max={325} />
            <BarCell value={off} max={44} />
            <BarCell value={due} max={22} />
          </tr>
        ))}
      </tbody>
      <tfoot>
        <tr className="h-[28px] border-t border-[#2b88e0] text-[15px] font-bold">
          <td className="px-1">Total</td>
          <td className="px-1 text-right">1,470</td>
          <td className="px-1 text-right">117</td>
          <td className="px-1 text-right">72</td>
        </tr>
      </tfoot>
    </table>
  );
}

/* ------------------------------------------------------------------ */
/* Report pages                                                        */
/* ------------------------------------------------------------------ */

function HomePage() {
  return (
    <div className="mb-[7px] mt-[14px] grid flex-1 grid-cols-[325fr_321fr_417fr] gap-[14px]">
      <Card className="flex flex-col items-center rounded-[22px] px-1 pt-[39px]">
        <SerifTitle>Due For Promotion</SerifTitle>
        <Big className="mt-[6px]">72</Big>
        <Pct className="mt-2">4.9%</Pct>
        <hr className="mb-[42px] mt-[51px] h-[2px] w-full border-0 bg-[#b3b3b3]" />
        <SerifTitle>Not Due For Promotion</SerifTitle>
        <Big className="mt-2">1,398</Big>
        <Pct className="mr-1 mt-[10px]">95.1%</Pct>
      </Card>
      <div className="flex min-w-0 flex-col justify-between">
        <Card className="rounded-[16px]">
          <ServiceYearChart />
        </Card>
        <Card className="rounded-[14px]">
          <JobLevelsChart />
        </Card>
      </div>
      <div className="flex min-w-0 flex-col justify-between">
        <div className="grid grid-cols-[215fr_186fr] gap-[15px]">
          <Card className="flex h-[121px] flex-col items-center rounded-[11px] pt-[7px]">
            <SerifTitle>On Services</SerifTitle>
            <Mid>1,353</Mid>
            <Pct className="ml-5">92.0%</Pct>
          </Card>
          <Card className="flex h-[121px] flex-col items-center rounded-[11px] pt-[7px]">
            <SerifTitle>Lay-Offs</SerifTitle>
            <Mid>117</Mid>
            <Pct className="ml-2">8.0%</Pct>
          </Card>
        </div>
        <Card className="rounded-[20px]">
          <DistanceChart />
        </Card>
      </div>
    </div>
  );
}

function ActionPage() {
  return (
    <div className="mt-2 flex flex-1 pl-[2px]">
      <div className="min-w-0 flex-[388] pt-[3px]">
        <PeopleTable measure="Due_to_be_promoted" people={PROMOTED} total={72} split="w-[214px]" />
      </div>
      <Scroller className="mb-[5px] ml-[18px] mr-[22px] mt-1" thumb="h-[104px]" />
      <div className="min-w-0 flex-[401] pt-1">
        <PeopleTable measure="Lay-Offs" people={LAID_OFF} total={117} alignLeft split="w-[244px]" />
      </div>
      <Scroller className="mb-1 ml-[6px] mr-[17px] mt-1" thumb="h-[64px]" />
      <section className="min-w-0 flex-[222] bg-[#d64550]">
        <p className="whitespace-nowrap pt-[120px] text-center text-[16px] font-extrabold leading-[24px] text-[#e6e6e6]">
          Those are the set
          <br />
          of Employees that
          <br />
          either need to be
          <br />
          promoted or
          <br />
          retired
        </p>
      </section>
    </div>
  );
}

function DetailsPage() {
  return (
    <div className="mt-[7px] grid flex-1 grid-cols-[432fr_645fr] gap-[14px]">
      <Card className="mb-[7px] rounded-[30px]">
        <DepartmentChart />
      </Card>
      <div className="min-w-0">
        <div className="grid grid-cols-[260fr_170fr_184fr] gap-[15px]">
          <Card className="rounded-[12px]">
            <SatisfactionChart />
          </Card>
          <Card className="rounded-[12px]">
            <OvertimeChart />
          </Card>
          <Card className="flex flex-col items-center rounded-[12px] px-[6px] pt-[7px]">
            <SerifTitle>High Rating</SerifTitle>
            <p className="mt-1 text-[26px] font-bold leading-8 text-[#666666]">84.6%</p>
            <hr className="mb-[5px] mt-[13px] h-[2px] w-full border-0 bg-[#b3b3b3]" />
            <SerifTitle>Low Rating</SerifTitle>
            <p className="mt-1 text-[26px] font-bold leading-8 text-[#666666]">15.4%</p>
          </Card>
        </div>
        <div className="mt-[11px] flex pl-[9px]">
          <div className="min-w-0 flex-1">
            <RoleTable />
          </div>
          <Scroller className="ml-[7px] h-[252px]" thumb="h-[194px]" />
        </div>
      </div>
    </div>
  );
}

/* ------------------------------------------------------------------ */
/* One application window                                              */
/* ------------------------------------------------------------------ */

function ReportWindow({ active, time, navItems, navClass, saveFocused, railMarked, hovered, className, children }) {
  const number = PAGES.indexOf(active) + 1;
  const id = active.toLowerCase();
  return (
    <div className={clsx("flex flex-1 flex-col", className)}>
      <TitleBar saveFocused={saveFocused} id={id} />
      <MenuBar />
      <Ribbon />
      <div className="flex flex-1">
        <Rail marked={railMarked} />
        <main className="flex min-w-0 flex-1 flex-col">
          <div className="flex flex-1">
            <div className="flex min-w-0 flex-1 bg-white pl-[13px] pr-[10px]">
              <div className="flex min-w-0 flex-1 gap-[9px] bg-[#e6e6e6] pl-2 pr-[10px] pt-[7px] shadow-[0_0_7px_rgba(0,0,0,0.18)]">
                <NavPill items={navItems} className={navClass} />
                <div className="flex min-w-0 flex-1 flex-col">
                  <TopRow hovered={hovered} />
                  {children}
                </div>
              </div>
            </div>
            <SidePane
              title="Filters"
              className="relative w-[30px] border-[#8a8886] bg-white pr-1 pt-[10px]"
              lead={
                <Icon box="0 0 11 11" className="mt-[14px] size-[11px]">
                  <path d="M10.400.600v9.800H9L5.500 6.800H.6V4.200h4.900L9 .600Z" />
                </Icon>
              }
            />
          </div>
          <PageTabs active={active} />
        </main>
        <SidePane title="Visualizations" className="w-[31px] border-[#e1dfdd] bg-[#f3f2f1] pt-[11px]" />
        <SidePane title="Data" className="w-[30px] border-[#e1dfdd] bg-[#f3f2f1] pt-[11px]" />
      </div>
      <StatusBar page={number} />
      <Taskbar time={time} id={id} />
    </div>
  );
}

export default function App() {
  return (
    <div className="flex min-h-screen bg-white font-['Noto_Sans','Open_Sans',sans-serif]">
      <div className="flex min-w-0 flex-[1360] overflow-hidden">
        <ReportWindow active="Home" time="6:50 PM" navItems={["Action", "Details"]} navClass="gap-[25px] pt-[107px]" saveFocused className="-ml-[11px]">
          <HomePage />
        </ReportWindow>
      </div>
      <div className="flex min-w-0 flex-[1368] overflow-hidden">
        <ReportWindow
          active="Action"
          time="6:51 PM"
          navItems={["Home", "Details"]}
          navClass="gap-[24px] pt-[86px]"
          saveFocused
          hovered
          className="-ml-1"
        >
          <ActionPage />
        </ReportWindow>
      </div>
      <div className="flex min-w-0 flex-[1368] overflow-hidden">
        <ReportWindow active="Details" time="6:53 PM" navItems={["Home", "Action"]} navClass="gap-[22px] pt-[86px]" railMarked className="-mr-[3px]">
          <DetailsPage />
        </ReportWindow>
      </div>
    </div>
  );
}
